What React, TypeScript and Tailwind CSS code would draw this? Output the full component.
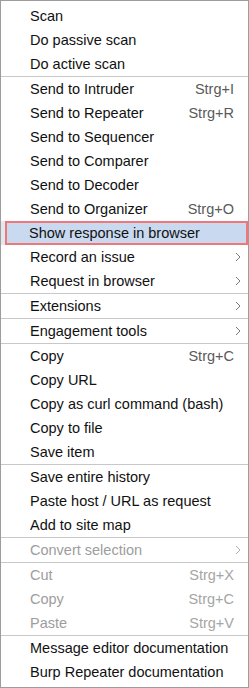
import React from "react";

type Item =
  | { sep: true }
  | { label: string; shortcut?: string; sub?: boolean; disabled?: boolean; selected?: boolean; sep?: false };

const items: Item[] = [
  { label: "Scan" },
  { label: "Do passive scan" },
  { label: "Do active scan" },
  { sep: true },
  { label: "Send to Intruder", shortcut: "Strg+I" },
  { label: "Send to Repeater", shortcut: "Strg+R" },
  { label: "Send to Sequencer" },
  { label: "Send to Comparer" },
  { label: "Send to Decoder" },
  { label: "Send to Organizer", shortcut: "Strg+O" },
  { label: "Show response in browser", selected: true },
  { label: "Record an issue", sub: true },
  { label: "Request in browser", sub: true },
  { sep: true },
  { label: "Extensions", sub: true },
  { sep: true },
  { label: "Engagement tools", sub: true },
  { sep: true },
  { label: "Copy", shortcut: "Strg+C" },
  { label: "Copy URL" },
  { label: "Copy as curl command (bash)" },
  { label: "Copy to file" },
  { label: "Save item" },
  { sep: true },
  { label: "Save entire history" },
  { label: "Paste host / URL as request" },
  { label: "Add to site map" },
  { sep: true },
  { label: "Convert selection", sub: true, disabled: true },
  { sep: true },
  { label: "Cut", shortcut: "Strg+X", disabled: true },
  { label: "Copy", shortcut: "Strg+C", disabled: true },
  { label: "Paste", shortcut: "Strg+V", disabled: true },
  { sep: true },
  { label: "Message editor documentation" },
  { label: "Burp Repeater documentation" },
];

function Chevron({ color }: { color: string }) {
  return (
    <svg width="6" height="10" viewBox="0 0 6 10" className="shrink-0">
      <path d="M1 1 L5 5 L1 9" fill="none" stroke={color} strokeWidth="1" />
    </svg>
  );
}

export default function App() {
  return (
    <div
      className="w-[249px] h-[688px] bg-white border border-[#9c9c9c] py-[3px] flex flex-col text-[14.5px] leading-none"
      style={{ fontFamily: '"Liberation Sans", Arial, sans-serif' }}
    >
      {items.map((it, i) => {
        if (it.sep) return <div key={i} className="h-px bg-[#c8c8c8] shrink-0" />;
        const textColor = it.disabled ? "text-[#9d9d9d]" : "text-[#111111]";
        const scColor = it.disabled ? "text-[#a5a5a5]" : "text-[#5a5a5a]";
        if (it.selected) {
          return (
            <div key={i} className="h-[24px] shrink-0 flex bg-[#e3e8ef]">
              <div className="ml-[4px] flex-1 flex items-center bg-[#c9d9ef] border-2 border-[#ef7777] pl-[22px] pr-[12px] text-[#111111]">
                {it.label}
              </div>
            </div>
          );
        }
        return (
          <div key={i} className={`h-[24px] shrink-0 flex items-center pl-[29px] pr-[14px] ${textColor}`}>
            <span className="flex-1 whitespace-nowrap">{it.label}</span>
            {it.shortcut && <span className={`${scColor}`}>{it.shortcut}</span>}
            {it.sub && (
              <span className="mr-[-7px]">
                <Chevron color={it.disabled ? "#b0b0b0" : "#7a7a7a"} />
              </span>
            )}
          </div>
        );
      })}
    </div>
  );
}
